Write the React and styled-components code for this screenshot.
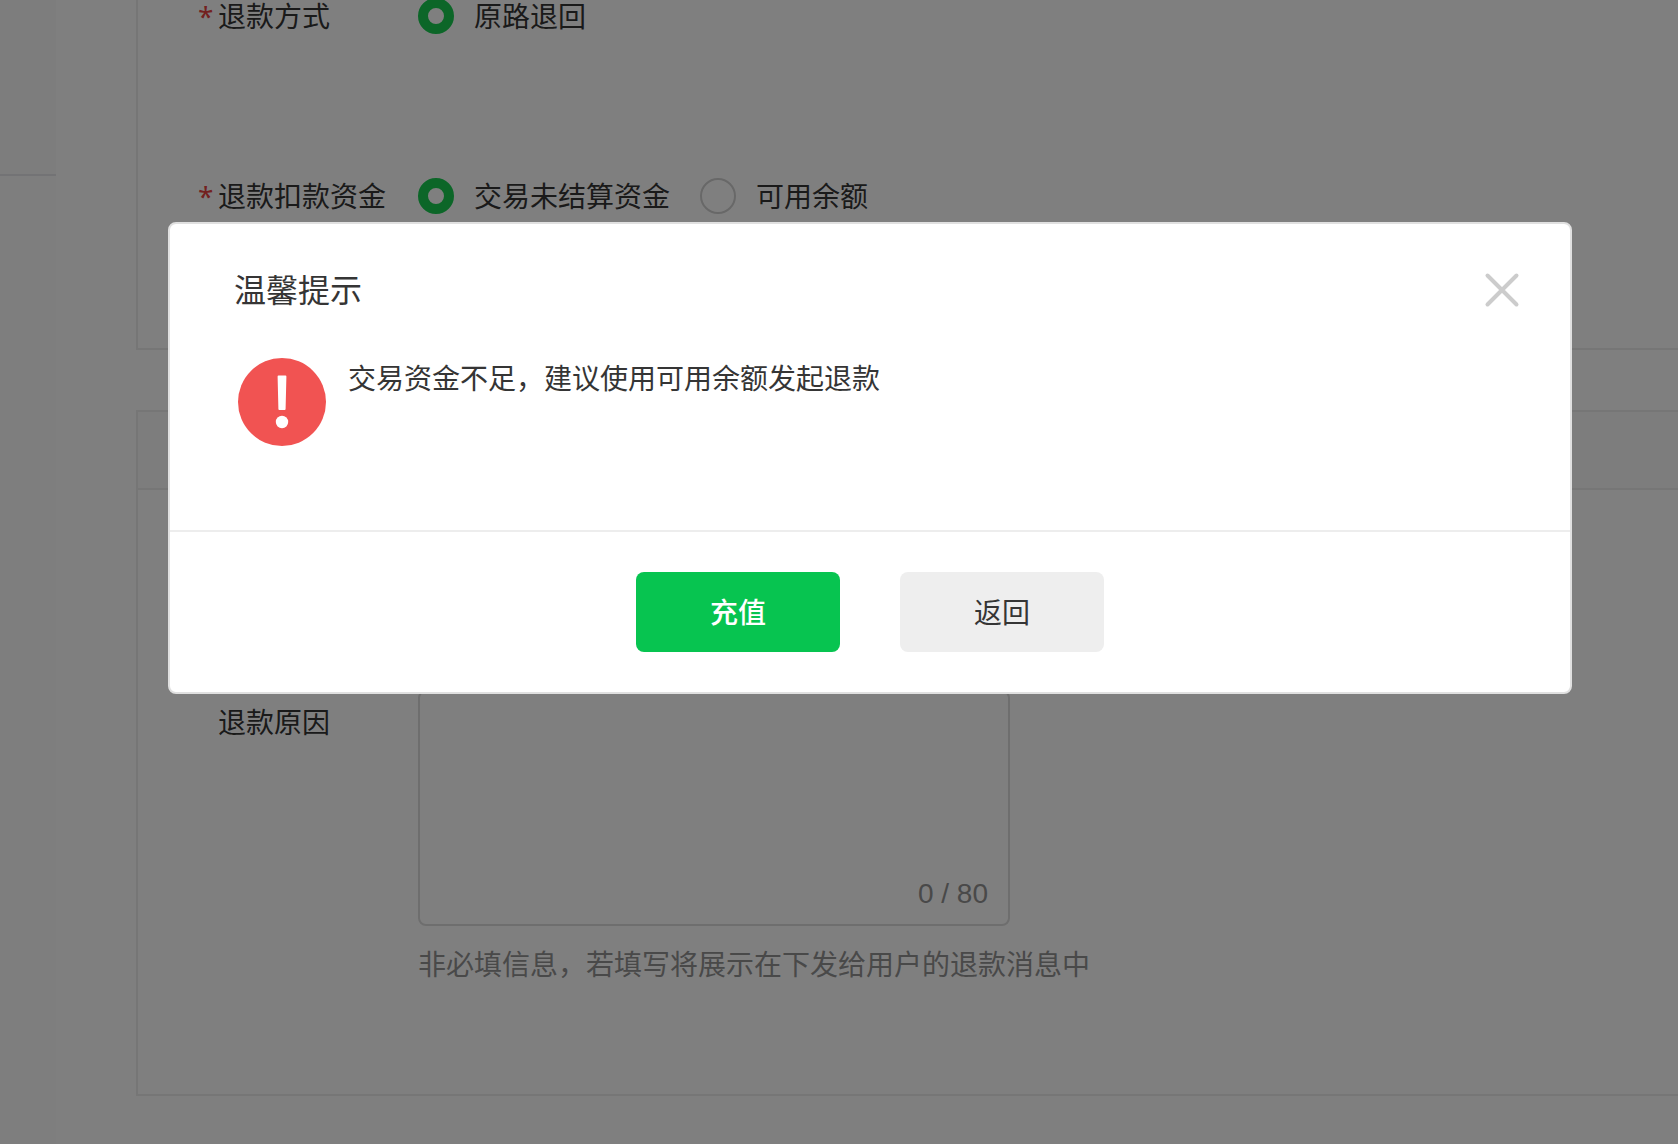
import React, { useState } from "react";
import styled, { createGlobalStyle } from "styled-components";

const GlobalStyle = createGlobalStyle`
  * {
    box-sizing: border-box;
  }
  body {
    margin: 0;
    background: #fff;
    color: #353535;
    font-family: "Noto Sans", "Noto Sans CJK SC", sans-serif;
    font-size: 28px;
    line-height: 40px;
  }
  button, input, textarea {
    font: inherit;
    color: inherit;
  }
`;

function WarnIcon() {
  return (
    <svg width="96" height="96" viewBox="0 0 96 96" aria-hidden="true">
      <circle cx="48" cy="48" r="44" fill="#f15352" />
      <path d="M43.6 22.4q0-.9.9-.9h7q.9 0 .9.9l-.8 32.7q0 .9-.9.9h-5.4q-.9 0-.9-.9z" fill="#fff" />
      <circle cx="48" cy="68" r="6.2" fill="#fff" />
    </svg>
  );
}

function CloseIcon() {
  return (
    <svg width="36" height="36" viewBox="0 0 36 36" aria-hidden="true">
      <path d="M3.5 3.5l29 29M32.5 3.5l-29 29" stroke="#ccc" strokeWidth="4" strokeLinecap="round" />
    </svg>
  );
}

function App() {
  const [source, setSource] = useState("unsettled");
  const [reason, setReason] = useState("");
  const [open, setOpen] = useState(true);

  return (
    <>
      <GlobalStyle />
      <Page>
        <Sidebar>
          <SidebarGroup />
        </Sidebar>
        <Main>
          <Panel>
            <Rows>
              <Row role="radiogroup" aria-labelledby="way">
                <Label id="way"><Star>*</Star>退款方式</Label>
                <Option>
                  <Radio type="radio" name="way" defaultChecked />
                  原路退回
                </Option>
              </Row>
              <Row role="radiogroup" aria-labelledby="source">
                <Label id="source"><Star>*</Star>退款扣款资金</Label>
                <Option>
                  <Radio
                    type="radio"
                    name="source"
                    checked={source === "unsettled"}
                    onChange={() => setSource("unsettled")}
                  />
                  交易未结算资金
                </Option>
                <Option>
                  <Radio
                    type="radio"
                    name="source"
                    checked={source === "balance"}
                    onChange={() => setSource("balance")}
                  />
                  可用余额
                </Option>
              </Row>
            </Rows>
          </Panel>

          <Panel $top>
            <PanelHead />
            <ReasonRow>
              <Label as="label" htmlFor="reason"><Star />退款原因</Label>
              <div>
                <ReasonBox>
                  <textarea
                    id="reason"
                    maxLength={80}
                    value={reason}
                    onChange={(e) => setReason(e.target.value)}
                  />
                  <Count>{reason.length} / 80</Count>
                </ReasonBox>
                <Hint>非必填信息，若填写将展示在下发给用户的退款消息中</Hint>
              </div>
            </ReasonRow>
          </Panel>
        </Main>
      </Page>

      {open && (
        <Mask>
          <Dialog role="dialog" aria-modal="true" aria-labelledby="dialog-title">
            <DialogHead>
              <h3 id="dialog-title">温馨提示</h3>
              <CloseButton type="button" aria-label="关闭" onClick={() => setOpen(false)}>
                <CloseIcon />
              </CloseButton>
            </DialogHead>
            <DialogBody>
              <WarnIcon />
              <p>交易资金不足，建议使用可用余额发起退款</p>
            </DialogBody>
            <DialogFoot>
              <Button type="button" $primary>充值</Button>
              <Button type="button" onClick={() => setOpen(false)}>返回</Button>
            </DialogFoot>
          </Dialog>
        </Mask>
      )}
    </>
  );
}

export default App;

const Page = styled.div`
  display: flex;
  min-height: 100vh;
`;

const Sidebar = styled.aside`
  flex: 0 0 56px;
  background: #fdfdfd;
`;

const SidebarGroup = styled.div`
  height: 176px;
  background: #fafafa;
  border-bottom: 2px solid #e7e7eb;
`;

const Main = styled.main`
  flex: 1;
  display: flex;
  flex-direction: column;
  gap: 60px;
  padding: 0 0 48px 80px;
`;

const Panel = styled.section`
  border: 2px solid #ededed;
  border-width: ${(p) => (p.$top ? "2px 0 2px 2px" : "0 0 2px 2px")};
`;

const PanelHead = styled.div`
  height: 78px;
  background: #fafafa;
  border-bottom: 2px solid #ededed;
`;

const Rows = styled.div`
  display: flex;
  flex-direction: column;
  gap: 148px;
  padding: 0 60px 136px;
`;

const Row = styled.div`
  display: flex;
  align-items: center;
  height: 32px;
  line-height: 32px;
`;

const Label = styled.div`
  display: flex;
  flex: 0 0 220px;
`;

const Star = styled.span`
  width: 20px;
  color: #e64340;
`;

const Option = styled.label`
  display: flex;
  align-items: center;
  gap: 20px;
  margin-right: 30px;
`;

const Radio = styled.input`
  appearance: none;
  width: 36px;
  height: 36px;
  margin: 0;
  border: 2px solid #d0d0d0;
  border-radius: 50%;

  &:checked {
    border: 10px solid #18cc50;
  }
`;

const ReasonRow = styled.div`
  display: flex;
  padding: 200px 60px 108px;

  > label {
    padding-top: 12px;
  }
`;

const ReasonBox = styled.div`
  display: flex;
  flex-direction: column;
  width: 592px;
  height: 236px;
  border: 2px solid #dcdcdc;
  border-radius: 8px;

  textarea {
    flex: 1;
    padding: 12px 20px;
    border: 0;
    outline: 0;
    resize: none;
    background: transparent;
  }
`;

const Count = styled.span`
  padding: 0 20px 10px;
  color: #929292;
  font-family: "Liberation Sans", Arial, sans-serif;
  text-align: right;
`;

const Hint = styled.p`
  margin: 18px 0 0;
  padding-bottom: 2px;
  color: #929292;
`;

const Mask = styled.div`
  position: fixed;
  inset: 0;
  display: flex;
  align-items: flex-start;
  padding: 222px 106px 0 168px;
  background: rgba(0, 0, 0, 0.5);
`;

const Dialog = styled.div`
  flex: 1;
  background: #fff;
  border: 2px solid #e0e0e0;
  border-radius: 8px;
`;

const DialogHead = styled.div`
  display: flex;
  align-items: center;
  justify-content: space-between;
  padding: 46px 50px 0 64px;

  h3 {
    margin: 0;
    font-size: 32px;
    font-weight: 400;
  }
`;

const CloseButton = styled.button`
  display: flex;
  padding: 0;
  border: 0;
  background: none;
  cursor: pointer;
`;

const DialogBody = styled.div`
  display: flex;
  gap: 18px;
  padding: 44px 64px 80px;

  p {
    margin: 4px 0 0;
  }
`;

const DialogFoot = styled.div`
  display: flex;
  justify-content: center;
  gap: 60px;
  padding: 40px;
  border-top: 2px solid #ededed;
`;

const Button = styled.button`
  width: 204px;
  height: 80px;
  border: 0;
  border-radius: 8px;
  background: ${(p) => (p.$primary ? "#07c450" : "#eee")};
  color: ${(p) => (p.$primary ? "#fff" : "#353535")};
  font-weight: ${(p) => (p.$primary ? 500 : 400)};
  cursor: pointer;
`;
